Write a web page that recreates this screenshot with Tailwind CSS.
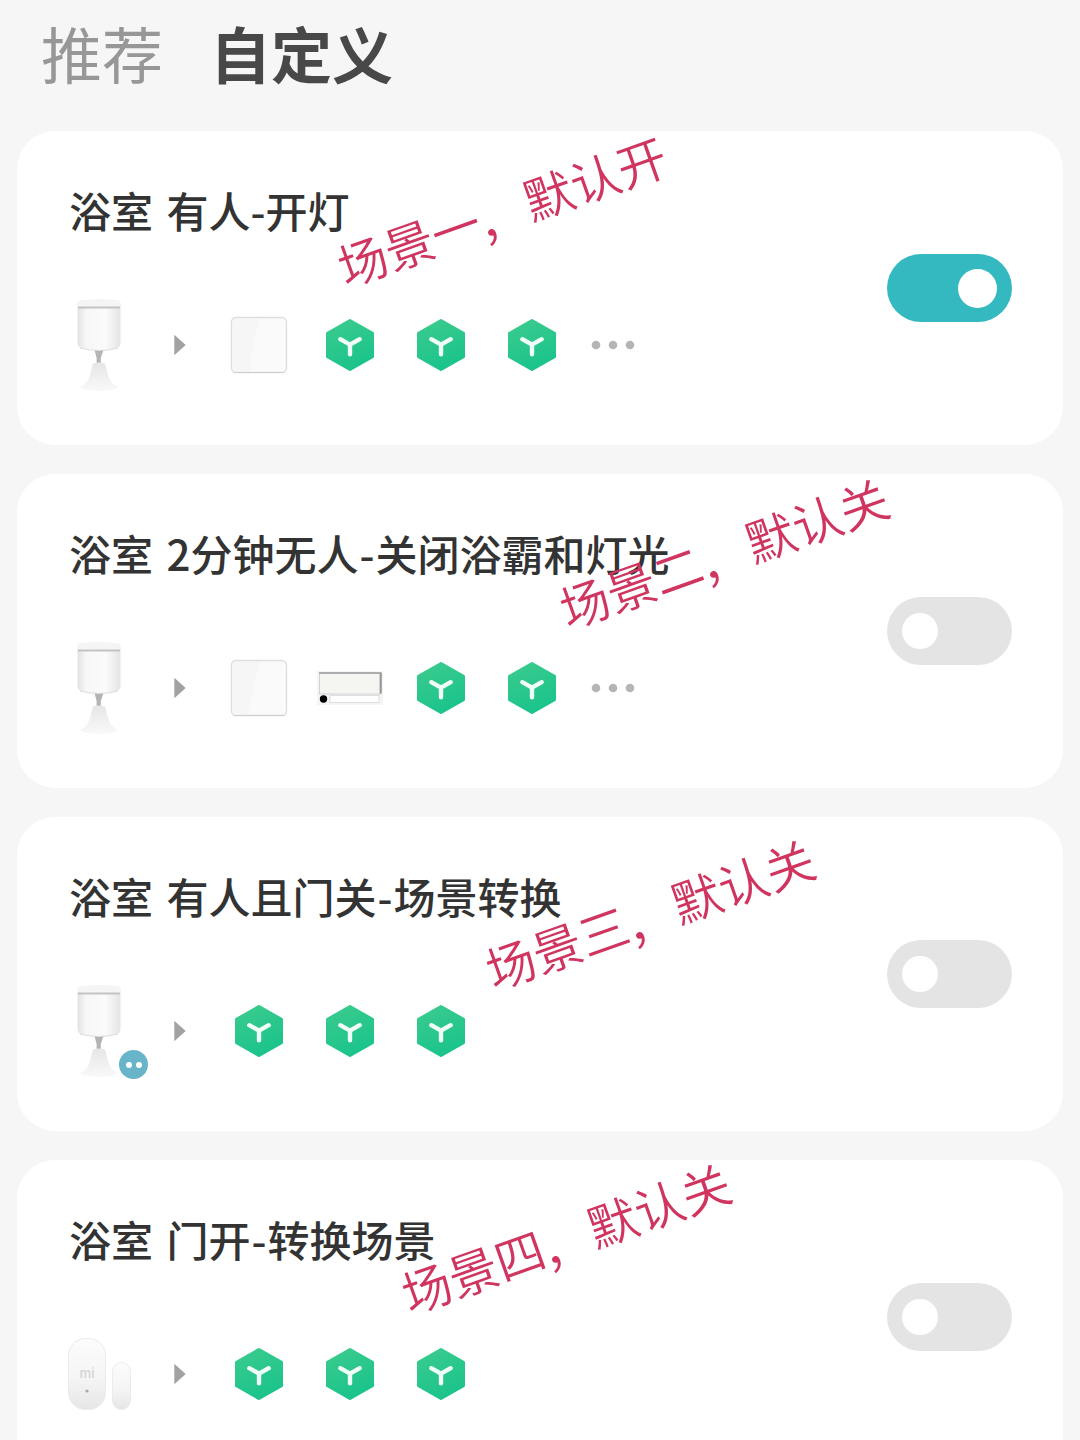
<!DOCTYPE html>
<html lang="zh-CN">
  <head>
    <meta charset="UTF-8" />
    <meta name="viewport" content="width=device-width, initial-scale=1.0" />
    <title>自定义</title>
    <script src="https://cdn.jsdelivr.net/npm/@tailwindcss/browser@4"></script>
  </head>
  <body class="bg-[#f6f6f6] h-[1440px] overflow-hidden font-['Noto_Sans_CJK_SC',sans-serif]">
    <!-- Shared icons (zero-size instead of hidden, so the gradients still resolve) -->
    <svg class="absolute size-0">
      <defs>
        <linearGradient id="green" x1="0" y1="0" x2="0.4" y2="1">
          <stop offset="0" stop-color="#3ccb8e" />
          <stop offset="1" stop-color="#1cc48b" />
        </linearGradient>
        <linearGradient id="body" x1="0" y1="0" x2="1" y2="0">
          <stop offset="0" stop-color="#e2e2e2" />
          <stop offset="0.2" stop-color="#f7f7f7" />
          <stop offset="0.65" stop-color="#fbfbfb" />
          <stop offset="1" stop-color="#e4e4e4" />
        </linearGradient>
        <linearGradient id="foot" x1="0" y1="0" x2="0" y2="1">
          <stop offset="0" stop-color="#e6e6e6" />
          <stop offset="1" stop-color="#f9f9f9" />
        </linearGradient>
        <linearGradient id="door" x1="0" y1="0" x2="0" y2="1">
          <stop offset="0" stop-color="#fcfcfc" />
          <stop offset="0.55" stop-color="#f5f5f5" />
          <stop offset="1" stop-color="#e6e6e6" />
        </linearGradient>
      </defs>
      <symbol id="scene" viewBox="0 0 50 54">
        <path d="M25 2.5 47.5 15.3V38.7L25 51.5 2.5 38.7V15.3Z" fill="url(#green)" stroke="url(#green)" stroke-width="3" stroke-linejoin="round" />
        <path d="M15.3 21.2 25 26.6 34.7 21.2M25 26.6V36.2" fill="none" stroke="#f1fff9" stroke-width="4.400" stroke-linecap="round" stroke-linejoin="round" />
      </symbol>
      <symbol id="sensor" viewBox="0 0 60 100">
        <path d="M25.500 55h9l-2.700 8v9h-4.200v-9z" fill="#b4b4b4" />
        <path d="M24 68.500q6-2 12 0l3.500 13q2 7 9.500 10.500-4 4-19 4t-19-4q7.500-3.500 9.500-10.500z" fill="url(#foot)" />
        <path d="M8.500 9q0-3 3-3.600 18.500-3 37 0 3 .6 3 3.600v39q0 4.500-5 5.500-16.500 3.500-33 0-5-1-5-5.500z" fill="url(#body)" />
        <path d="M8.500 12V9q0-3 3-3.600 18.500-3 37 0 3 .6 3 3.600v3z" fill="#f5f5f5" />
        <path d="M9 12.500h42" stroke="#c3c3c3" stroke-width="1.800" />
        <path d="M11 53q19 5 38 0" fill="none" stroke="#dcdcdc" stroke-width="1" />
      </symbol>
      <symbol id="switch" viewBox="0 0 58 58">
        <rect x="1.500" y="1.500" width="55" height="55" rx="4.500" fill="#fafafa" stroke="#dedede" stroke-width="1.400" />
        <path d="M3 3h27q-8 24-10.500 52H5.500q-2.500 0-2.500-2.500z" fill="#f6f6f6" />
        <path d="M4 56.500h50" stroke="#cfcfcf" stroke-width="1" />
      </symbol>
      <symbol id="heater" viewBox="0 0 68 36">
        <rect x="1" y="1" width="66" height="34" fill="#f5f5f5" />
        <rect x="3.500" y="3.500" width="61" height="20.500" fill="#f5f5f2" stroke="#d2d2d2" />
        <path d="M3 3h62.500" stroke="#adadad" stroke-width="2" />
        <path d="M64.700 3v20.500" stroke="#989898" stroke-width="2.200" />
        <rect x="14" y="25.500" width="49" height="7" fill="#fff" stroke="#dedede" />
        <circle cx="7.500" cy="29" r="3.700" fill="#000" />
      </symbol>
      <symbol id="arrow" viewBox="0 0 12 22">
        <path d="M.3.8 11.700 11 .3 21.200z" fill="#a2a2a2" />
      </symbol>
      <symbol id="more" viewBox="0 0 44 10">
        <g fill="#b5b5b5">
          <circle cx="5" cy="5" r="4.300" />
          <circle cx="22" cy="5" r="4.300" />
          <circle cx="39" cy="5" r="4.300" />
        </g>
      </symbol>
    </svg>

    <header class="h-[131px] pl-[41px] flex items-start">
      <span class="mt-[8px] text-[61px] leading-[90px] text-[#979797]">推荐</span>
      <span class="mt-[8px] ml-[47px] text-[61px] leading-[90px] font-bold text-[#484848]">自定义</span>
    </header>

    <main class="ml-[17px] w-[1046px] flex flex-col gap-[29px]">
      <!-- Scene 1 -->
      <section class="relative h-[314px] shrink-0 rounded-[38px] bg-white pl-[52px] pr-[51px] flex items-center justify-between">
        <div class="self-start pt-[48px]">
          <h2 class="h-[62px] text-[42px] leading-[62px] font-medium text-[#333] whitespace-nowrap [word-spacing:4px]">浴室 有人-开灯</h2>
          <div class="mt-[54px] h-[100px] flex items-center">
            <svg class="w-[60px] h-[100px]"><use href="#sensor" /></svg>
            <svg class="ml-[45px] w-[12px] h-[22px]"><use href="#arrow" /></svg>
            <div class="ml-[27px] flex items-center">
              <span class="w-[91px] flex justify-center"><svg class="w-[58px] h-[58px]"><use href="#switch" /></svg></span>
              <span class="w-[91px] flex justify-center"><svg class="w-[50px] h-[54px]"><use href="#scene" /></svg></span>
              <span class="w-[91px] flex justify-center"><svg class="w-[50px] h-[54px]"><use href="#scene" /></svg></span>
              <span class="w-[91px] flex justify-center"><svg class="w-[50px] h-[54px]"><use href="#scene" /></svg></span>
            </div>
            <svg class="ml-[14px] w-[44px] h-[10px]"><use href="#more" /></svg>
          </div>
        </div>
        <div class="w-[125px] h-[68px] rounded-full bg-[#34b9c0] flex items-center justify-end pr-[15px]">
          <span class="size-[39px] rounded-full bg-white"></span>
        </div>
        <p class="absolute left-[312px] top-[54px] w-[345px] text-[49.300px] leading-[50px] font-[350] text-[#d03560] whitespace-nowrap -rotate-[19.5deg]">场景一<span class="inline-block -translate-x-[4px] translate-y-[5px]">，</span>默认开</p>
      </section>

      <!-- Scene 2 -->
      <section class="relative h-[314px] shrink-0 rounded-[38px] bg-white pl-[52px] pr-[51px] flex items-center justify-between">
        <div class="self-start pt-[48px]">
          <h2 class="h-[62px] text-[42px] leading-[62px] font-medium text-[#333] whitespace-nowrap [word-spacing:4px]">浴室 2分钟无人<span class="mx-[1px]">-</span>关闭浴霸和灯光</h2>
          <div class="mt-[54px] h-[100px] flex items-center">
            <svg class="w-[60px] h-[100px]"><use href="#sensor" /></svg>
            <svg class="ml-[45px] w-[12px] h-[22px]"><use href="#arrow" /></svg>
            <div class="ml-[27px] flex items-center">
              <span class="w-[91px] flex justify-center"><svg class="w-[58px] h-[58px]"><use href="#switch" /></svg></span>
              <span class="w-[91px] flex justify-center"><svg class="w-[68px] h-[36px]"><use href="#heater" /></svg></span>
              <span class="w-[91px] flex justify-center"><svg class="w-[50px] h-[54px]"><use href="#scene" /></svg></span>
              <span class="w-[91px] flex justify-center"><svg class="w-[50px] h-[54px]"><use href="#scene" /></svg></span>
            </div>
            <svg class="ml-[14px] w-[44px] h-[10px]"><use href="#more" /></svg>
          </div>
        </div>
        <div class="w-[125px] h-[68px] rounded-full bg-[#e4e4e4] flex items-center pl-[15px]">
          <span class="size-[36px] rounded-full bg-white"></span>
        </div>
        <p class="absolute left-[534px] top-[53px] w-[345px] text-[49.300px] leading-[50px] font-[350] text-[#d03560] whitespace-nowrap -rotate-[19.5deg]">场景二<span class="inline-block -translate-x-[4px] translate-y-[5px]">，</span>默认关</p>
      </section>

      <!-- Scene 3 -->
      <section class="relative h-[314px] shrink-0 rounded-[38px] bg-white pl-[52px] pr-[51px] flex items-center justify-between">
        <div class="self-start pt-[48px]">
          <h2 class="h-[62px] text-[42px] leading-[62px] font-medium text-[#333] whitespace-nowrap [word-spacing:4px]">浴室 有人且门关<span class="mx-[1px]">-</span>场景转换</h2>
          <div class="mt-[54px] h-[100px] flex items-center">
            <div class="relative">
              <svg class="w-[60px] h-[100px]"><use href="#sensor" /></svg>
              <span class="absolute left-[50px] top-[69px] size-[29px] rounded-full bg-[#68b5ca] flex items-center justify-center gap-[4px]">
                <i class="size-[6px] rounded-full bg-white"></i>
                <i class="size-[6px] rounded-full bg-white"></i>
              </span>
            </div>
            <svg class="ml-[45px] w-[12px] h-[22px]"><use href="#arrow" /></svg>
            <div class="ml-[27px] flex items-center">
              <span class="w-[91px] flex justify-center"><svg class="w-[50px] h-[54px]"><use href="#scene" /></svg></span>
              <span class="w-[91px] flex justify-center"><svg class="w-[50px] h-[54px]"><use href="#scene" /></svg></span>
              <span class="w-[91px] flex justify-center"><svg class="w-[50px] h-[54px]"><use href="#scene" /></svg></span>
            </div>
          </div>
        </div>
        <div class="w-[125px] h-[68px] rounded-full bg-[#e4e4e4] flex items-center pl-[15px]">
          <span class="size-[36px] rounded-full bg-white"></span>
        </div>
        <p class="absolute left-[460px] top-[71px] w-[345px] text-[49.300px] leading-[50px] font-[350] text-[#d03560] whitespace-nowrap -rotate-[19.5deg]">场景三<span class="inline-block -translate-x-[4px] translate-y-[5px]">，</span>默认关</p>
      </section>

      <!-- Scene 4 -->
      <section class="relative h-[314px] shrink-0 rounded-[38px] bg-white pl-[52px] pr-[51px] flex items-center justify-between">
        <div class="self-start pt-[48px]">
          <h2 class="h-[62px] text-[42px] leading-[62px] font-medium text-[#333] whitespace-nowrap [word-spacing:4px]">浴室 门开<span class="mx-[1px]">-</span>转换场景</h2>
          <div class="mt-[54px] h-[100px] flex items-center">
            <!-- Door sensor -->
            <svg class="-ml-[2px] w-[66px] h-[74px]" viewBox="0 0 66 74">
              <rect x="1.500" y="1.500" width="37" height="71" rx="17" fill="url(#door)" stroke="#ebebeb" />
              <rect x="45.500" y="25.500" width="18" height="47" rx="9" fill="url(#door)" stroke="#ebebeb" />
              <text x="20" y="41" text-anchor="middle" font-size="13" font-weight="600" font-family="Inter, sans-serif" fill="#d6d6d6">mi</text>
              <circle cx="20" cy="54" r="1.600" fill="#aaa" />
            </svg>
            <svg class="ml-[41px] w-[12px] h-[22px]"><use href="#arrow" /></svg>
            <div class="ml-[27px] flex items-center">
              <span class="w-[91px] flex justify-center"><svg class="w-[50px] h-[54px]"><use href="#scene" /></svg></span>
              <span class="w-[91px] flex justify-center"><svg class="w-[50px] h-[54px]"><use href="#scene" /></svg></span>
              <span class="w-[91px] flex justify-center"><svg class="w-[50px] h-[54px]"><use href="#scene" /></svg></span>
            </div>
          </div>
        </div>
        <div class="w-[125px] h-[68px] rounded-full bg-[#e4e4e4] flex items-center pl-[15px]">
          <span class="size-[36px] rounded-full bg-white"></span>
        </div>
        <p class="absolute left-[376px] top-[52px] w-[345px] text-[49.300px] leading-[50px] font-[350] text-[#d03560] whitespace-nowrap -rotate-[19.5deg]">场景四<span class="inline-block -translate-x-[4px] translate-y-[5px]">，</span>默认关</p>
      </section>
    </main>
  </body>
</html>
